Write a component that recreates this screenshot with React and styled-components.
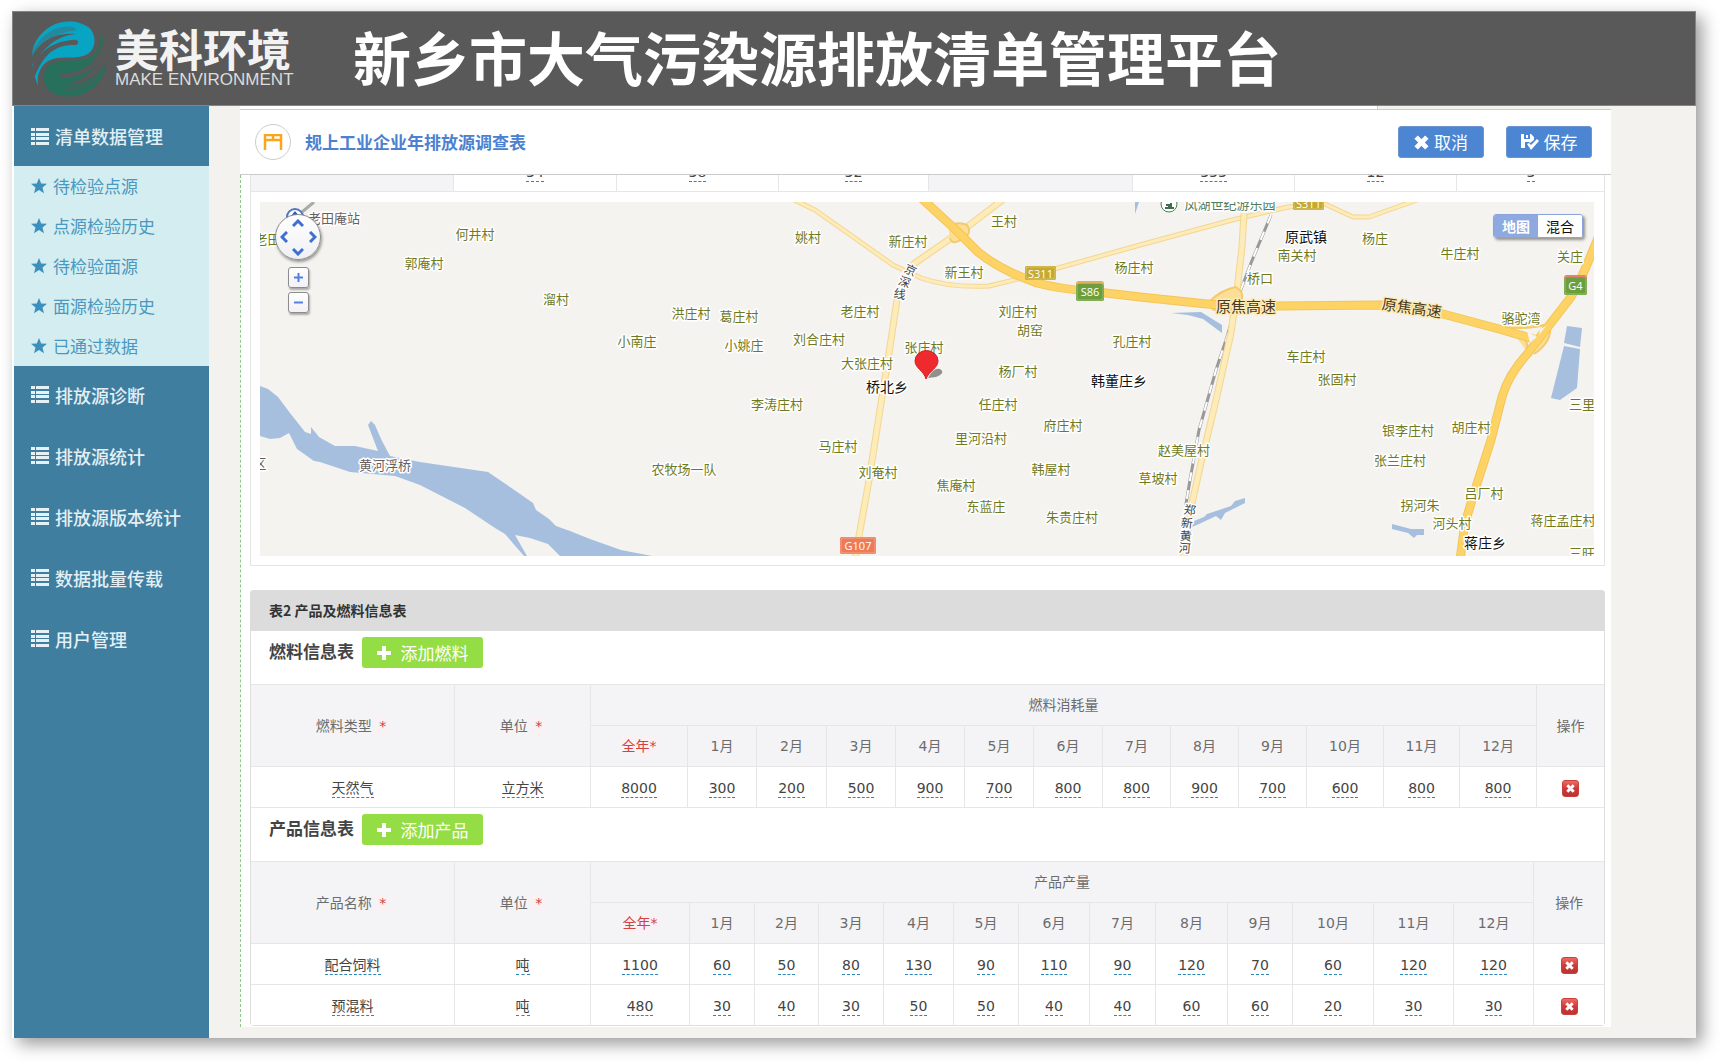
import React from "react";
import styled, { createGlobalStyle } from "styled-components";

const cjk = `"Noto Sans CJK SC", sans-serif`;

const GlobalStyle = createGlobalStyle`
  *, *::before, *::after { box-sizing: border-box; }
  body {
    margin: 0;
    background: #fff;
    color: #444;
    font-family: "DejaVu Sans", ${cjk};
    font-size: 14px;
    line-height: 20px;
  }
  button { font-family: inherit; cursor: pointer; margin: 0; padding: 0; }
  a { text-decoration: none; color: inherit; }
  h1, h2, h3, p, ul { margin: 0; padding: 0; }
  ul { list-style: none; }
`;

/* ---------- frame ---------- */

const Page = styled.div`
  padding: 11px 24px 24px 12px;
`;

const Window = styled.div`
  background: #fff;
  box-shadow: 6px 6px 16px rgba(0, 0, 0, 0.4);
`;

const Header = styled.header`
  display: flex;
  align-items: center;
  height: 95px;
  padding: 0 18px;
  background: #595959;
  border: 1px solid #858585;
`;

const Brand = styled.div`
  display: flex;
  align-items: center;
  gap: 7px;
  width: 322px;
  flex: none;
`;

const BrandText = styled.div`
  padding-bottom: 6px;
  color: #f2f2f2;
`;

const BrandName = styled.p`
  font: bold 44px/48px ${cjk};
`;

const BrandLatin = styled.p`
  font: 17px/16px "Liberation Sans", sans-serif;
  color: #dcdcdc;
`;

const SiteTitle = styled.h1`
  padding-bottom: 6px;
  font: bold 58px/88px ${cjk};
  color: #fff;
  white-space: nowrap;
`;

const Body = styled.div`
  display: flex;
  margin-left: 2px;
  background: #f3f2ef;
`;

/* ---------- sidebar ---------- */

const Sidebar = styled.nav`
  width: 195px;
  flex: none;
  background: #3f7e9f;
  font-family: ${cjk};
`;

const MenuLink = styled.a`
  display: flex;
  align-items: center;
  gap: 6px;
  height: ${(p) => (p.$open ? "60px" : "61px")};
  padding: 0 0 ${(p) => (p.$open ? "0" : "4px")} 17px;
  font-size: 18px;
  font-weight: 500;
  color: #e2eff5;
`;

const SubMenu = styled.ul`
  background: #d4edf0;
`;

const SubLink = styled.a`
  display: flex;
  align-items: center;
  gap: 6px;
  height: 40px;
  padding-left: 17px;
  font-size: 17px;
  color: #4a98bf;
`;

/* ---------- content ---------- */

const Content = styled.main`
  flex: 1;
  min-width: 0;
  margin: 0 85px 11px 31px;
`;

const TabStrip = styled.div`
  width: 83%;
  height: 3px;
  background: #fff;
  border-right: 1px solid #ccc;
`;

const ToolHead = styled.div`
  display: flex;
  align-items: center;
  height: 66px;
  padding: 0 19px 0 15px;
  background: #fff;
  border: solid #cbcbcb;
  border-width: 1px 0;
`;

const RoundIcon = styled.span`
  display: grid;
  place-items: center;
  width: 36px;
  height: 36px;
  border: 1px solid #ccc;
  border-radius: 50%;
`;

const FormTitle = styled.h2`
  margin-left: 14px;
  flex: 1;
  font: bold 17px/24px ${cjk};
  color: #4c80d0;
`;

const ActionButton = styled.button`
  display: flex;
  align-items: center;
  justify-content: center;
  gap: 5px;
  width: 86px;
  height: 32px;
  margin-left: 22px;
  border: 1px solid #6d94cf;
  border-radius: 3px;
  background: #4c86d3;
  color: #fff;
  font: 17px/24px ${cjk};
`;

const FormArea = styled.div`
  padding: 0 6px 1px 9px;
  background: #fff;
  border-left: 1px dashed #8cc98c;
`;

const MapSection = styled.section`
  border: solid #e4e4e6;
  border-width: 0 1px 1px;
  margin-bottom: 24px;
`;

const ClippedRow = styled.div`
  display: flex;
  align-items: flex-end;
  height: 17px;
  overflow: hidden;
  border-bottom: 1px solid #e6e6e6;
`;

const MapFrame = styled.div`
  position: relative;
  margin: 10px 10px 9px 9px;
  height: 354px;
  overflow: hidden;
  background: #f4f3ef;
  font-family: ${cjk};
  svg.map { display: block; width: 100%; height: 100%; }
`;

const MapControls = styled.div`
  position: absolute;
  left: 15px;
  top: 12px;
  width: 46px;
  display: flex;
  flex-direction: column;
  align-items: center;
  gap: 4px;
`;

const PanPad = styled.div`
  display: grid;
  grid-template-columns: 15px 14px 15px;
  grid-template-rows: 15px 14px 15px;
  width: 46px;
  height: 46px;
  margin-bottom: 3px;
  border: 1px solid #8c8c8c;
  border-radius: 50%;
  background: linear-gradient(#fff, #eff0f4);
  box-shadow: 1px 2px 3px rgba(0, 0, 0, 0.4);
`;

const PanButton = styled.button`
  display: grid;
  place-items: center;
  grid-area: ${(p) => p.$area};
  border: 0;
  background: none;
  svg { transform: rotate(${(p) => p.$turn}deg); }
`;

const ZoomButton = styled.button`
  display: grid;
  place-items: center;
  width: 21px;
  height: 21px;
  border: 1px solid #8c8c8c;
  border-radius: 3px;
  background: linear-gradient(#fff, #f1f1f6);
  box-shadow: 1px 2px 2px rgba(0, 0, 0, 0.3);
`;

const MapTypes = styled.div`
  position: absolute;
  top: 12px;
  right: 11px;
  display: flex;
  border: 1px solid #8ba4dc;
  border-radius: 3px;
  overflow: hidden;
  box-shadow: 2px 2px 3px rgba(0, 0, 0, 0.4);
`;

const TypeButton = styled.button`
  width: 44px;
  height: 22px;
  border: 0;
  background: ${(p) => (p.$on ? "#8ea8e0" : "#fff")};
  color: ${(p) => (p.$on ? "#fff" : "#111")};
  font: ${(p) => (p.$on ? "bold" : "normal")} 14px/20px ${cjk};
`;

const TableSection = styled.section`
  border: 1px solid #dedede;
  border-top: 0;
  border-radius: 4px;
`;

const SectionHead = styled.h2`
  height: 41px;
  margin: 0 -1px;
  padding: 0 19px;
  border-radius: 4px 4px 0 0;
  background: #dcdcdc;
  font: bold 14px/40px ${cjk};
  color: #333;
`;

const GroupHead = styled.div`
  display: flex;
  align-items: flex-start;
  gap: 8px;
  height: 53px;
  padding: 6px 18px;
`;

const GroupTitle = styled.h3`
  font: bold 17px/28px ${cjk};
  color: #444;
`;

const AddButton = styled.button`
  display: flex;
  align-items: center;
  justify-content: center;
  gap: 10px;
  width: 121px;
  height: 31px;
  border: 0;
  border-radius: 3px;
  background: #95dd44;
  color: #fff;
  font: 17px/24px ${cjk};
`;

const Table = styled.table`
  width: 100%;
  table-layout: fixed;
  border-collapse: separate;
  border-spacing: 0;
  border-bottom: ${(p) => (p.$open ? "0" : "1px solid #e6e6e6")};
`;

const cell = `
  height: 41px;
  padding: 0;
  text-align: center;
  font-weight: normal;
  border: solid #e6e6e6;
  border-width: 1px 0 0 1px;
  &:first-child { border-left: 0; }
`;

const Th = styled.th`
  ${cell}
  height: ${(p) => (p.$tall ? "42px" : "41px")};
  background: #f4f4f7;
  color: #6c6c6c;
  tr + tr > &:first-child { border-left: 1px solid #e6e6e6; }
`;

const Td = styled.td`
  ${cell}
  background: #fff;
`;

const Required = styled.span`
  padding: 2px ${(p) => (p.$wide ? "0" : "3px")};
  border-radius: 3px;
  background: #f9f1f3;
  color: #d2433d;
`;

const Editable = styled.a`
  display: inline-block;
  height: 20px;
  line-height: 20px;
  vertical-align: middle;
  color: #444;
  border-bottom: 1px dashed #2c86b8;
`;

const DeleteButton = styled.button`
  display: inline-grid;
  place-items: center;
  width: 17px;
  height: 17px;
  vertical-align: middle;
  border: 1px solid #c9403c;
  border-radius: 3px;
  background: linear-gradient(#ee6a62, #cf3a38 50%, #b93432);
`;

/* ---------- icons ---------- */

const Swoosh = () => (
  <>
    <path d="M36 219C30 186 44 152 78 139C108 128 162 142 190 120C214 100 211 62 190 43C160 19 108 19 76 38C38 60 16 98 18 130C18 165 25 195 36 219Z" />
    <path d="M14 140C34 88 84 56 150 62C118 66 66 76 22 158Z" fill="#595959" />
    <path d="M18 168C36 120 74 84 150 80C160 84 160 94 150 96C96 94 54 116 26 192Z" fill="#595959" />
    <path d="M17 122C34 76 72 48 108 42C138 36 152 44 152 52C112 54 58 72 18 134Z" fill="#595959" opacity=".35" />
  </>
);

const Logo = () => (
  <svg width="77" height="78" viewBox="15 20 232 236" aria-hidden="true">
    <g fill="#26705c" transform="rotate(180 130 138)"><Swoosh /></g>
    <g fill="#08a4c4"><Swoosh /></g>
  </svg>
);

const ListIcon = () => (
  <svg width="18" height="17" viewBox="0 0 18 17" fill="#e6f1f6" aria-hidden="true">
    {[0, 5, 9, 14].map((y) => (
      <g key={y}>
        <rect x="0" y={y} width="4" height="3" />
        <rect x="5" y={y} width="13" height="3" />
      </g>
    ))}
  </svg>
);

const StarIcon = () => (
  <svg width="16" height="16" viewBox="0 0 16 16" fill="#3d90bd" aria-hidden="true">
    <path d="M8 0l2.2 5.4 5.8.4-4.5 3.7L13 15.200 8 12 3 15.200l1.500-5.700L0 5.800l5.800-.4z" />
  </svg>
);

const DeskIcon = () => (
  <svg width="20" height="16" viewBox="0 0 20 16" fill="none" stroke="#fba51c" strokeWidth="2.500" aria-hidden="true">
    <path d="M2 16V1h16v15M2 6h16M10 1v5" />
  </svg>
);

const CrossIcon = ({ size = 15 }) => (
  <svg width={size} height={size} viewBox="0 0 14 14" stroke="#fff" strokeWidth="4.500" aria-hidden="true">
    <path d="M2 2l10 10M12 2L2 12" />
  </svg>
);

const SaveIcon = () => (
  <svg width="18" height="16" viewBox="0 0 18 16" fill="#fff" aria-hidden="true">
    <path d="M0 0h3v5h6V0h1l3 3v3l-4 3-1-1H4v6H0z" />
    <rect x="5" y="1" width="2" height="3" />
    <path d="M6 10l2-1 2 2 6-6 2 2-8 9z" />
  </svg>
);

const PlusIcon = () => (
  <svg width="14" height="14" viewBox="0 0 14 14" fill="#fff" aria-hidden="true">
    <path d="M5 0h4v5h5v4H9v5H5V9H0V5h5z" />
  </svg>
);

const Chevron = () => (
  <svg width="12" height="8" viewBox="0 0 12 8" fill="none" stroke="#3f6fd0" strokeWidth="3" aria-hidden="true">
    <path d="M1 7l5-5 5 5" />
  </svg>
);

const Sign = ({ plus }) => (
  <svg width="9" height="9" viewBox="0 0 9 9" stroke="#5580e0" strokeWidth="2" aria-hidden="true">
    <path d={plus ? "M0 4.500h9M4.500 0v9" : "M0 4.500h9"} />
  </svg>
);

/* ---------- map ---------- */

const villages = [
  ["老田庵", 274, 238], ["何井村", 475, 233], ["郭庵村", 424, 262], ["溜村", 556, 298],
  ["姚村", 808, 236], ["新庄村", 908, 240], ["王村", 1004, 220], ["新王村", 964, 271],
  ["洪庄村", 691, 312], ["葛庄村", 739, 315], ["老庄村", 860, 310], ["刘庄村", 1018, 310],
  ["胡窑", 1030, 329], ["小南庄", 637, 340], ["小姚庄", 744, 344], ["刘合庄村", 819, 338],
  ["张庄村", 924, 346], ["杨庄村", 1134, 266], ["孔庄村", 1132, 340], ["大张庄村", 867, 362],
  ["李涛庄村", 777, 403], ["马庄村", 838, 445], ["农牧场一队", 684, 468], ["刘奄村", 878, 471],
  ["杨厂村", 1018, 370], ["任庄村", 998, 403], ["府庄村", 1063, 424], ["里河沿村", 981, 437],
  ["韩屋村", 1051, 468], ["焦庵村", 956, 484], ["东蓝庄", 986, 505], ["朱贵庄村", 1072, 516],
  ["杨庄", 1375, 237], ["南关村", 1297, 254], ["牛庄村", 1460, 252], ["关庄", 1570, 255],
  ["桥口", 1260, 277], ["骆驼湾", 1521, 317], ["车庄村", 1306, 355], ["张固村", 1337, 378],
  ["三里", 1582, 403], ["银李庄村", 1408, 429], ["胡庄村", 1471, 426], ["张兰庄村", 1400, 459],
  ["赵美屋村", 1184, 449], ["草坡村", 1158, 477], ["吕厂村", 1484, 492], ["拐河朱", 1420, 504],
  ["河头村", 1452, 522], ["蒋庄孟庄村", 1563, 519], ["三旺", 1582, 552],
];
const towns = [["原武镇", 1306, 236], ["桥北乡", 887, 386], ["韩董庄乡", 1119, 380], ["蒋庄乡", 1485, 542]];
const roadChars = [
  ["京", 911, 269, 25], ["深", 905, 281, 20], ["线", 900, 293, 10],
  ["郑", 1190, 509, 8], ["新", 1187, 522, 6], ["黄", 1186, 535, 4], ["河", 1185, 547, 4],
];

const Halo = styled.g`
  text-anchor: middle;
  dominant-baseline: central;
  paint-order: stroke;
  stroke: ${(p) => p.$halo || "#fff"};
  stroke-width: 3px;
  stroke-linejoin: round;
  fill: ${(p) => p.$ink};
  font-size: ${(p) => p.$size || 13}px;
`;

const ShieldText = styled.text`
  font: 11px "Open Sans", sans-serif;
  fill: #fff;
  text-anchor: middle;
  dominant-baseline: central;
`;

const Shield = ({ x, y, w, h, fill, top, children }) => (
  <g>
    <rect x={x} y={y} width={w} height={h} rx="3" fill={top || fill} />
    <rect x={x} y={top ? y + 3 : y} width={w} height={top ? h - 3 : h} rx="2" fill={fill} />
    <rect x={x + 1} y={y + 1} width={w - 2} height={h - 2} rx="2" fill="none" stroke="#fff" strokeOpacity=".3" />
    <ShieldText x={x + w / 2} y={y + h / 2}>{children}</ShieldText>
  </g>
);

const Road = ({ d, w, fill = "#fdebb8", edge = "#f3d694" }) => (
  <g fill="none" strokeLinejoin="round">
    <path d={d} stroke={edge} strokeWidth={w} />
    <path d={d} stroke={fill} strokeWidth={w - 2} />
  </g>
);

const rail = "M1271 215L1251 263L1240 292L1227 337L1216 370L1199 430L1190 480L1185 510";

const MapDrawing = () => (
  <svg className="map" viewBox="260 202 1334 354" preserveAspectRatio="xMidYMid slice" role="img" aria-label="地图">
    <g fill="#a6bfdf">
      <path d="M260 386L268 389L278 397L290 413L305 432L311 434L311 427L319 437L335 446L355 446L378 451L368 425L371 421L375 425L382 441L390 456L420 462L488 472L510 487L533 503L536 510L549 519L556 526L570 531L590 539L621 550L652 556L560 556L548 544L530 538L515 535L527 556L524 556L505 534L495 528L465 508L420 485L395 476L350 472L320 462L314 461L297 449L289 433L280 438L270 439L260 436Z" />
      <path d="M1171 313L1201 312L1222 325L1222 333L1203 319L1188 315Z" />
      <path d="M1567 326L1582 328L1580 347L1564 343Z" />
      <path d="M1564 346L1580 349L1577 388L1560 400L1551 398Z" />
      <path d="M1194 521L1204 517L1207 514L1219 510L1231 506L1235 501L1245 498L1245 503L1225 513L1221 520L1216 516L1199 524L1192 527L1192 531L1188 535L1186 530Z" />
      <path d="M1392 524L1411 529L1424 529L1424 535L1417 535L1414 538L1408 533L1392 529Z" />
      <path d="M1135 202L1139 202L1135 214Z" />
    </g>
    <path d="M302 212L314 202" stroke="#aaa" strokeWidth="3" />
    <Road w={5} d="M790 198L815 210L893 265L921 278Q950 288 989 286L1022 278L1058 268L1140 245L1232 220L1288 207L1325 204L1353 217L1369 217L1417 200" />
    <Road w={7} d="M1005 198L967 227L915 263Q906 272 904 283L897 300L889 353L882 397L869 480L856 553L855 560" />
    <path d={rail} fill="none" stroke="#999" strokeWidth="3" />
    <path d={rail} fill="none" stroke="#fff" strokeWidth="2" strokeDasharray="9 9" />
    <Road w={7} d="M1244 213L1242 247L1237 290L1231 333L1216 400L1201 463L1192 503L1183 560" />
    <g fill="#fbdf96" stroke="#f5c96c" strokeWidth="2">
      <path d="M948 226Q958 221 967 225Q973 234 962 239Q952 246 950 238" />
      <path d="M1208 303Q1220 290 1236 287Q1246 294 1240 302M1209 304Q1214 316 1226 304" />
      <path d="M1502 327Q1530 330 1548 324M1512 331Q1530 336 1527 352M1550 326Q1552 342 1534 354" />
    </g>
    <Road w={9} fill="#fdd365" edge="#f5c45a" d="M919 196L956 230L978 252Q1000 270 1037 283Q1060 289 1089 291L1140 297L1207 304Q1240 307 1277 306L1380 305Q1410 306 1443 314L1499 329L1534 339" />
    <Road w={9} fill="#fdd365" edge="#f5c45a" d="M1598 238L1586 267Q1580 282 1571 297L1547 328L1528 353Q1508 375 1502 397L1491 440L1475 490L1465 523L1460 560" />
    <path d="M1527 331L1537 337L1530 343ZM1540 329L1546 326L1539 335Z" fill="#f4f3ef" />

    <Shield x={1025} y={266} w={31} h={14} fill="#c5aa2f">S311</Shield>
    <Shield x={1293} y={196} w={31} h={14} fill="#c5aa2f">S311</Shield>
    <Shield x={1076} y={281} w={28} h={20} fill="#6c9f3c" top="#e0a13f">S86</Shield>
    <Shield x={1564} y={275} w={23} h={20} fill="#6c9f3c" top="#dd6c5c">G4</Shield>
    <Shield x={840} y={537} w={36} h={17} fill="#ef7a57">G107</Shield>

    <Halo $ink="#6f7a1e">
      {villages.map(([name, x, y]) => <text key={name + x} x={x} y={y}>{name}</text>)}
    </Halo>
    <Halo $ink="#6a5f5f">
      <text x="334" y="217">老田庵站</text>
      <text x="260" y="462">区</text>
      <text x="385" y="464">黄河浮桥</text>
    </Halo>
    <Halo $ink="#4f7d5c"><text x="1230" y="203">凤湖世纪游乐园</text></Halo>
    <circle cx="1169" cy="204" r="8" fill="#fff" stroke="#4f7d5c" />
    <path d="M1165 201h8M1166 205h3v3h-4M1171 203v5h3" fill="none" stroke="#3f6e4c" strokeWidth="2" />
    <Halo $ink="#111" $size={14}>
      {towns.map(([name, x, y]) => <text key={name} x={x} y={y}>{name}</text>)}
    </Halo>
    <Halo $ink="#4a3a20" $size={15} $halo="#fdebb8">
      <text x="1246" y="305">原焦高速</text>
      <text x="1412" y="307" transform="rotate(8 1412 307)">原焦高速</text>
    </Halo>
    <Halo $ink="#444" $size={12}>
      {roadChars.map(([c, x, y, r]) => <text key={c} x={x} y={y} transform={`rotate(${r} ${x} ${y})`}>{c}</text>)}
    </Halo>

    <circle cx="295" cy="217" r="8" fill="#fff" stroke="#4d78c0" strokeWidth="2" />
    <path d="M295 211l4 5h-8z" fill="#2f5fb0" />

    <path d="M928 378Q934 367 940 369Q946 373 936 377Z" fill="#777" opacity=".8" />
    <path d="M926 379C924 371 915 368 915 361A11 10 0 0 1 938 361C938 368 929 371 926 379Z" fill="#ee2a2e" stroke="#c92226" />
  </svg>
);

const CompanyMap = () => (
  <MapFrame>
    <MapDrawing />
    <MapControls>
      <PanPad>
        <PanButton $area="1 / 2" $turn={0} aria-label="向上"><Chevron /></PanButton>
        <PanButton $area="2 / 1" $turn={-90} aria-label="向左"><Chevron /></PanButton>
        <PanButton $area="2 / 3" $turn={90} aria-label="向右"><Chevron /></PanButton>
        <PanButton $area="3 / 2" $turn={180} aria-label="向下"><Chevron /></PanButton>
      </PanPad>
      <ZoomButton aria-label="放大"><Sign plus /></ZoomButton>
      <ZoomButton aria-label="缩小"><Sign /></ZoomButton>
    </MapControls>
    <MapTypes>
      <TypeButton $on>地图</TypeButton>
      <TypeButton>混合</TypeButton>
    </MapTypes>
  </MapFrame>
);

/* ---------- tables ---------- */

const months = Array.from({ length: 12 }, (_, i) => `${i + 1}月`);

const Cols = ({ widths }) => (
  <colgroup>
    {widths.map((w, i) => <col key={i} style={{ width: w }} />)}
  </colgroup>
);

const MonthTable = ({ widths, nameLabel, groupLabel, rows, open }) => (
  <Table $open={open}>
    <Cols widths={widths} />
    <thead>
      <tr>
        <Th $tall rowSpan={2}>{nameLabel} <Required>*</Required></Th>
        <Th rowSpan={2}>单位 <Required>*</Required></Th>
        <Th colSpan={13}>{groupLabel}</Th>
        <Th rowSpan={2}>操作</Th>
      </tr>
      <tr>
        <Th><Required $wide>全年*</Required></Th>
        {months.map((m) => <Th key={m}>{m}</Th>)}
      </tr>
    </thead>
    <tbody>
      {rows.map((row) => (
        <tr key={row[0]}>
          {row.map((v, i) => <Td key={i}><Editable href="#">{v}</Editable></Td>)}
          <Td><DeleteButton aria-label="删除"><CrossIcon size={9} /></DeleteButton></Td>
        </tr>
      ))}
    </tbody>
  </Table>
);

const fuelWidths = [203, 136, 97, 69, 70, 69, 69, 69, 69, 68, 68, 68, 77, 76, 77, 68];
const productWidths = [203, 136, 99, 65, 64, 65, 70, 65, 71, 66, 72, 65, 81, 80, 80, 71];
const summaryWidths = [202, 163, 162, 150, 204, 162, 162, 149];

const fuels = [["天然气", "立方米", 8000, 300, 200, 500, 900, 700, 800, 800, 900, 700, 600, 800, 800]];
const products = [
  ["配合饲料", "吨", 1100, 60, 50, 80, 130, 90, 110, 90, 120, 70, 60, 120, 120],
  ["预混料", "吨", 480, 30, 40, 30, 50, 50, 40, 40, 60, 60, 20, 30, 30],
];
const summary = [null, 34, 38, 32, null, 333, 12, 3];

const menu = ["排放源诊断", "排放源统计", "排放源版本统计", "数据批量传载", "用户管理"];
const subMenu = ["待检验点源", "点源检验历史", "待检验面源", "面源检验历史", "已通过数据"];

export default function App() {
  return (
    <>
      <GlobalStyle />
      <Page>
        <Window>
          <Header>
            <Brand>
              <Logo />
              <BrandText>
                <BrandName>美科环境</BrandName>
                <BrandLatin>MAKE ENVIRONMENT</BrandLatin>
              </BrandText>
            </Brand>
            <SiteTitle>新乡市大气污染源排放清单管理平台</SiteTitle>
          </Header>
          <Body>
            <Sidebar>
              <MenuLink $open href="#"><ListIcon />清单数据管理</MenuLink>
              <SubMenu>
                {subMenu.map((s) => <li key={s}><SubLink href="#"><StarIcon />{s}</SubLink></li>)}
              </SubMenu>
              {menu.map((m) => <MenuLink key={m} href="#"><ListIcon />{m}</MenuLink>)}
            </Sidebar>
            <Content>
              <TabStrip />
              <ToolHead>
                <RoundIcon><DeskIcon /></RoundIcon>
                <FormTitle>规上工业企业年排放源调查表</FormTitle>
                <ActionButton><CrossIcon />取消</ActionButton>
                <ActionButton><SaveIcon />保存</ActionButton>
              </ToolHead>
              <FormArea>
                <MapSection>
                  <ClippedRow>
                    <Table $open>
                      <Cols widths={summaryWidths} />
                      <tbody>
                        <tr>
                          {summary.map((v, i) =>
                            v === null ? <Th key={i} /> : <Td key={i}><Editable href="#">{v}</Editable></Td>
                          )}
                        </tr>
                      </tbody>
                    </Table>
                  </ClippedRow>
                  <CompanyMap />
                </MapSection>
                <TableSection>
                  <SectionHead>表2 产品及燃料信息表</SectionHead>
                  <GroupHead>
                    <GroupTitle>燃料信息表</GroupTitle>
                    <AddButton><PlusIcon />添加燃料</AddButton>
                  </GroupHead>
                  <MonthTable widths={fuelWidths} nameLabel="燃料类型" groupLabel="燃料消耗量" rows={fuels} />
                  <GroupHead>
                    <GroupTitle>产品信息表</GroupTitle>
                    <AddButton><PlusIcon />添加产品</AddButton>
                  </GroupHead>
                  <MonthTable open widths={productWidths} nameLabel="产品名称" groupLabel="产品产量" rows={products} />
                </TableSection>
              </FormArea>
            </Content>
          </Body>
        </Window>
      </Page>
    </>
  );
}
